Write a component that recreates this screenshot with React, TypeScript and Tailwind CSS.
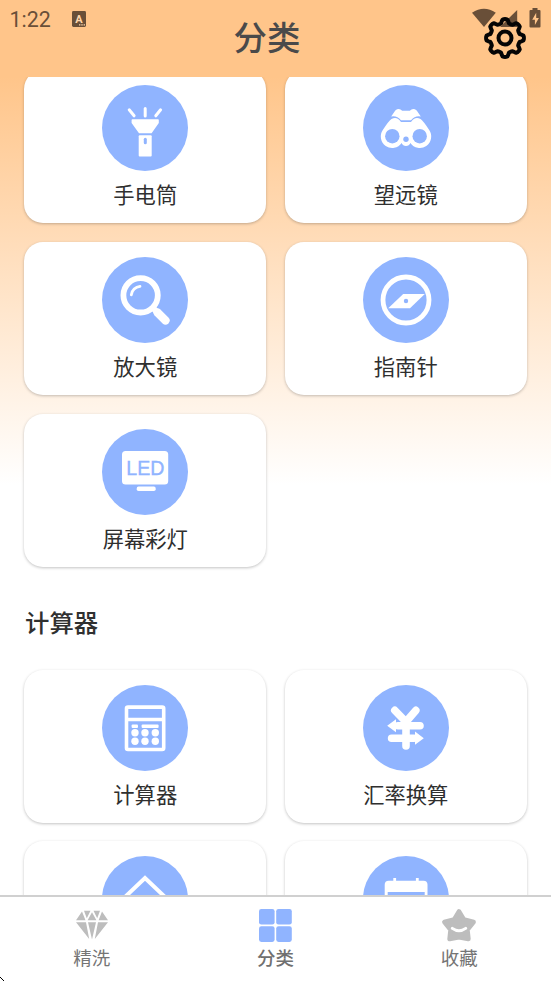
import type { ReactNode } from 'react';

const BLUE = '#90b4ff';

function Disc({ children }: { children: ReactNode }) {
  return (
    <svg viewBox="-43 -43 86 86" className="block size-[86px] shrink-0">
      <circle r="43" fill={BLUE} />
      {children}
    </svg>
  );
}

const Flashlight = () => (
  <Disc>
    <path d="M-15.8-18.2-10.9-12.2M.2-19.6v7.6M15.6-18.2 10.8-12.2" stroke="#fff" strokeWidth="3" strokeLinecap="round" />
    <path d="M-12.6-8.8H13q.8 0 .8.8v3L6.6 5.2H-6L-13.4-5v-3q0-.8.8-.8Z" fill="#fff" />
    <rect x="-6.3" y="7.2" width="13" height="21.2" rx="1" fill="#fff" />
    <rect x="-1.2" y="9.8" width="3" height="6.4" rx="1.5" fill={BLUE} />
  </Disc>
);

const Binoculars = () => (
  <Disc>
    <path d="M-14.8-11.5-10.7-17.5Q-7-20.6-3.8-17.2H3.8Q7-20.6 10.7-17.5L14.8-11.5Q9-12.6 5-7.8H-5Q-9-12.6-14.8-11.5Z" fill="#fff" />
    <path d="M-14.5-9Q-9-12-5-6H5Q9-12 14.5-9Q17-7.5 23.2 2A11.3 11.3 0 1 1 4.4 15A4.8 4.8 0 0 1-4.4 15A11.3 11.3 0 1 1-23.2 2Q-17-7.5-14.5-9Z" fill="#fff" />
    <circle cx="-13.7" cy="8.2" r="7.2" fill={BLUE} />
    <circle cx="13.7" cy="8.2" r="7.2" fill={BLUE} />
    <circle cx="0" cy="11.3" r="2.7" fill={BLUE} />
  </Disc>
);

const Magnifier = () => (
  <Disc>
    <g fill="none" stroke="#fff" strokeLinecap="round">
      <circle cx="-4.4" cy="-4.7" r="17.2" strokeWidth="5.8" />
      <path d="M-13.7-5.2A9.6 9.6 0 0 1-5-13.6" strokeWidth="2.8" />
      <path d="m8 8 5 5" strokeWidth="6" />
      <path d="m12.5 12.5 8 8" strokeWidth="8.2" />
    </g>
  </Disc>
);

const Compass = () => (
  <Disc>
    <circle r="23" fill="none" stroke="#fff" strokeWidth="4.8" />
    <path d="M-17.8 8.2-2.8-6H18.8L4 8.2Z" fill="#fff" />
    <circle cy="1" r="2.2" fill={BLUE} />
  </Disc>
);

const Led = () => (
  <Disc>
    <rect x="-23" y="-20.9" width="46.2" height="33.4" rx="3.5" fill="#fff" />
    <rect x="-8.3" y="14.6" width="19" height="4.5" rx="1.8" fill="#fff" />
    <text x=".4" y="3.2" textAnchor="middle" fill={BLUE} stroke={BLUE} strokeWidth=".35" className="font-['Liberation_Sans',sans-serif] text-[19.6px]">
      LED
    </text>
  </Disc>
);

const Calculator = () => (
  <Disc>
    <rect x="-18.5" y="-20.9" width="37.2" height="42.4" rx="1.5" fill="none" stroke="#fff" strokeWidth="3.6" />
    <path d="M-18-8.5H18" stroke="#fff" strokeWidth="3.6" />
    <g fill="#fff">
      <rect x="-13.4" y="-3.4" width="6.4" height="3.4" rx="1" />
      <rect x="-3.4" y="-3.4" width="17" height="3.4" rx="1" />
      {[-10, 0, 10.3].map((x) => [4.8, 13.3].map((y) => <circle key={`${x},${y}`} cx={x} cy={y} r="3.7" />))}
    </g>
  </Disc>
);

const Exchange = () => (
  <Disc>
    <g fill="none" stroke="#fff" strokeWidth="7.6" strokeLinecap="round">
      <path d="M-11.2-17.6 0-6.2 9.8-17.6M0-6V18" />
      <path d="M-8-2.2H14M-14.4 10.2H8" />
    </g>
    <path d="M-18.8-2.2-10-8.8V4.2ZM17.8 10.2 9 3.6V16.8Z" fill="#fff" />
  </Disc>
);

const House = () => (
  <Disc>
    <path d="M-24 1.8 0-21 24 1.8" fill="none" stroke="#fff" strokeWidth="4" />
  </Disc>
);

const CalendarIcon = () => (
  <Disc>
    <path d="M-11.3-21v6M11.3-21v6" stroke="#fff" strokeWidth="2.8" />
    <rect x="-21.3" y="-18.2" width="42.8" height="40" rx="4" fill="#fff" />
    <rect x="-18.3" y="-7" width="37" height="25" fill={BLUE} />
  </Disc>
);

function Card({ icon, label }: { icon: ReactNode; label: string }) {
  return (
    <div className="flex h-[153.4px] flex-col items-center rounded-[19px] bg-white pt-[15.3px] shadow-[0_1px_3px_rgba(0,0,0,0.24)]">
      {icon}
      <span className="mt-[7px] text-[21.3px] leading-[32px] text-[#2f2f2f]">{label}</span>
    </div>
  );
}

function Gear() {
  const points = Array.from({ length: 96 }, (_, i) => {
    const a = (i / 96) * Math.PI * 2;
    const w = Math.cos(8 * a);
    const r = 16.9 + (2 * Math.tanh(2.4 * w)) / Math.tanh(2.4);
    return `${(r * Math.cos(a)).toFixed(2)},${(r * Math.sin(a)).toFixed(2)}`;
  }).join(' ');
  return (
    <svg viewBox="-22 -22 44 44" className="absolute left-[483px] top-[16px] size-[44px]" fill="none" stroke="#050505" strokeWidth="4" strokeLinejoin="round">
      <polygon points={points} />
      <circle r="6.5" />
    </svg>
  );
}

function Header() {
  return (
    <header className="relative h-[76.6px] shrink-0 bg-[#ffc58a]">
      <div className="flex h-[38px] items-center px-[9.6px] text-[#694f38]">
        <div className="flex items-center gap-[21px]">
          <span className="pt-[1px] font-['Roboto',sans-serif] text-[21.4px] leading-[38px]">1:22</span>
          <svg viewBox="0 0 14 16" className="h-[16px] w-[14px]">
            <rect width="14" height="16" rx="1.4" fill="currentColor" />
            <text x="7" y="11.5" textAnchor="middle" fill="#ffd7ad" className="font-['Roboto',sans-serif] text-[11px] font-bold">A</text>
            <path d="M7 13.8h1.4M9.3 13.8h1.4M11.6 13.8H13" stroke="#ffd7ad" strokeWidth="1.2" />
          </svg>
        </div>
      </div>
      <svg viewBox="0 0 70 22" className="absolute left-[472px] top-[7px] h-[22px] w-[70px]" fill="#694f38">
        <path d="M0 5.8Q12-2.4 23.8 5.8L12 20Z" />
        <path d="M45.2 3v17H28Z" />
        <path d="M60.5 1h5v2h2q1 0 1 1v15.5q0 1-1 1h-9q-1 0-1-1V4q0-1 1-1h2Z" />
        <path d="m64.2 5.7-4 7h2.7v5.2l4-7h-2.7Z" fill="#ffc58a" />
      </svg>
      <h1 className="absolute inset-x-0 top-[12px] pr-[17px] text-center text-[33.5px] font-medium leading-[48px] text-[#4a4a4a]">分类</h1>
      <Gear />
    </header>
  );
}

const Diamond = () => (
  <svg viewBox="0 0 34 30" className="h-[30px] w-[34px]" fill="#bdbdbd">
    <path d="M7 1.5 10.5 10.3H1ZM9 .8h6.5L11.8 8.2ZM18.5.8H25L22.2 8.2ZM27 1.5l6 8.8h-9.4ZM17 2.2l4.4 8.1h-8.8ZM1 12.3h10L14.2 29ZM13 12.3h8L17 29.6ZM23 12.3h10L19.8 29Z" />
  </svg>
);

const Tiles = () => (
  <svg viewBox="0 0 33 33" className="size-[33px]" fill="#90b4ff">
    <rect width="15.6" height="15.6" rx="2.3" />
    <rect x="17.2" width="15.6" height="15.6" rx="2.3" />
    <rect y="17.3" width="15.6" height="15.6" rx="2.3" />
    <rect x="17.2" y="17.3" width="15.6" height="15.6" rx="2.3" />
  </svg>
);

const SmileStar = () => (
  <svg viewBox="0 0 36 34" className="h-[34px] w-[36px]">
    <path
      d="m18 3.4 4.8 8 9.8 2.6-6.2 7.8 1 9.2L18 29.2 8.6 31l1-9.2L3.4 14l9.8-2.6Z"
      fill="#bdbdbd"
      stroke="#bdbdbd"
      strokeWidth="4.6"
      strokeLinejoin="round"
    />
    <path d="M11.3 20.4q6.7 4.8 13.4 0" fill="none" stroke="#fff" strokeWidth="3" strokeLinecap="round" />
  </svg>
);

function Tab({ icon, label, active = false }: { icon: ReactNode; label: string; active?: boolean }) {
  return (
    <div className="flex flex-1 flex-col items-center pt-[10.4px]">
      <div className="flex h-[36px] items-center justify-center">{icon}</div>
      <span className={`mt-[1px] text-[18.5px] leading-[27px] ${active ? 'font-medium text-[#707070]' : 'text-[#757575]'}`}>{label}</span>
    </div>
  );
}

export default function App() {
  return (
    <div className="relative flex h-[981px] w-[551px] flex-col overflow-hidden bg-white font-['Noto_Sans_CJK_SC',sans-serif]">
      <Header />
      <main className="min-h-0 flex-1 overflow-hidden bg-[linear-gradient(#ffc58a_0px,#ffffff_408px)] px-[24.4px]">
        <div className="-mt-[6.6px] grid grid-cols-2 gap-x-[18.8px] gap-y-[18.4px]">
          <Card icon={<Flashlight />} label="手电筒" />
          <Card icon={<Binoculars />} label="望远镜" />
          <Card icon={<Magnifier />} label="放大镜" />
          <Card icon={<Compass />} label="指南针" />
          <Card icon={<Led />} label="屏幕彩灯" />
        </div>
        <h2 className="mt-[37px] h-[65.6px] pl-[0.6px] text-[24.4px] font-medium leading-[36px] text-[#303030]">计算器</h2>
        <div className="grid grid-cols-2 gap-x-[18.8px] gap-y-[18.2px]">
          <Card icon={<Calculator />} label="计算器" />
          <Card icon={<Exchange />} label="汇率换算" />
          <Card icon={<House />} label="" />
          <Card icon={<CalendarIcon />} label="" />
        </div>
      </main>
      <nav className="flex h-[86px] shrink-0 border-t-2 border-[#d0d0d0] bg-white">
        <Tab icon={<Diamond />} label="精洗" />
        <Tab icon={<Tiles />} label="分类" active />
        <Tab icon={<SmileStar />} label="收藏" />
      </nav>
      <svg viewBox="0 0 4 4" className="absolute bottom-0 left-0 size-[4px]" shapeRendering="crispEdges">
        <path d="M0 0h1v1H0ZM1 1h1v1H1ZM2 2h1v1H2ZM3 3h1v1H3Z" fill="#000" />
      </svg>
    </div>
  );
}
